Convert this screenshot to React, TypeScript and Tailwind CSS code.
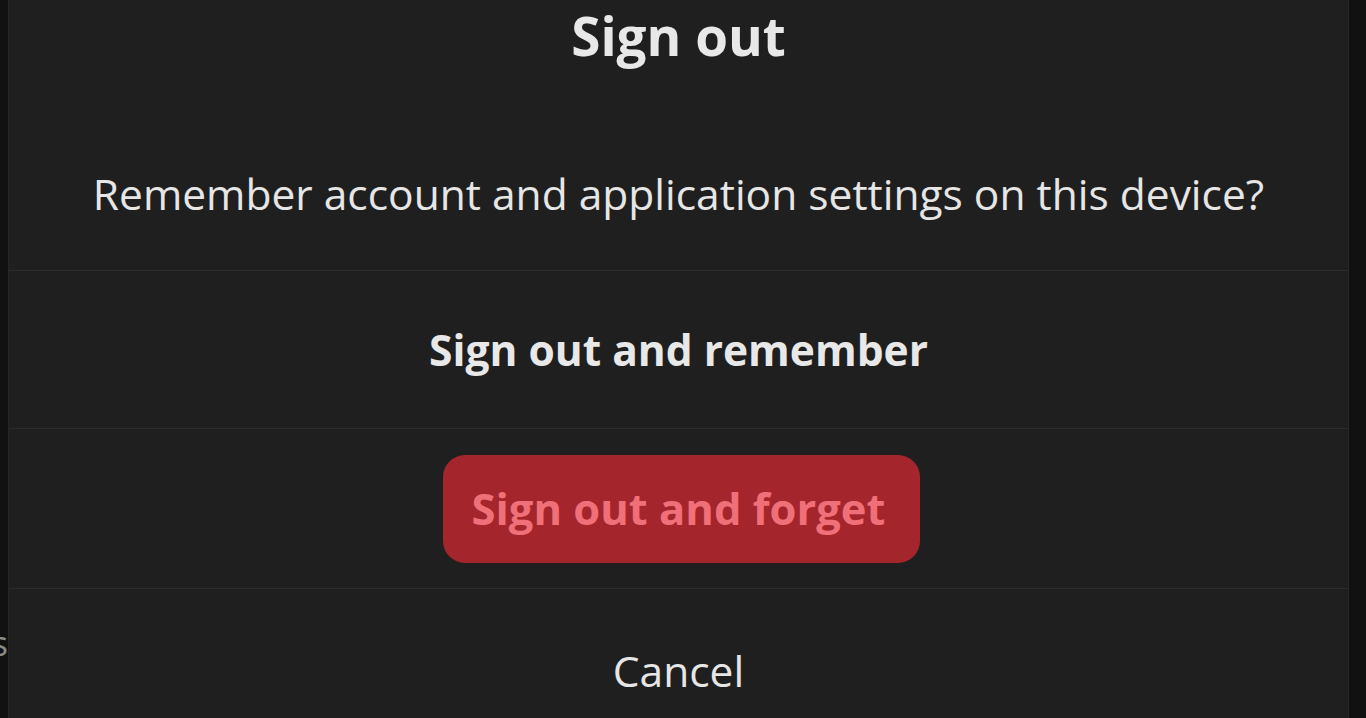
export default function App() {
  const font = { fontFamily: '"Open Sans", "Noto Sans", sans-serif' };

  return (
    <div className="flex h-[718px] w-full overflow-hidden bg-[#111111] text-[#e6e6e6]" style={font}>
      {/* page behind the dialog */}
      <div className="flex w-[8px] shrink-0 flex-col justify-end overflow-hidden pb-[58px]">
        <div className="flex justify-end">
          <span className="shrink-0 text-[34px] leading-none text-[#8a8a8a]">s</span>
        </div>
      </div>

      <div className="flex flex-1 flex-col border-x border-[#262626] bg-[#1f1f1f]">
        <div className="flex h-[271px] shrink-0 flex-col items-center border-b border-[#2c2c2c]">
          <h1 className="text-[53px] font-bold leading-[72px] text-[#e8e8e8]">Sign out</h1>
          <p className="mt-[92px] text-[42.5px] leading-[60px]">
            Remember account and application settings on this device?
          </p>
        </div>

        <div className="flex h-[158px] shrink-0 items-center justify-center border-b border-[#2c2c2c]">
          <button className="text-[42.5px] font-bold text-[#e8e8e8]">Sign out and remember</button>
        </div>

        <div className="flex h-[160px] shrink-0 items-center justify-center border-b border-[#2c2c2c]">
          <button className="ml-[6px] flex h-[108px] w-[477px] items-center justify-center rounded-[22px] bg-[#a4262c] pr-[6px] text-[43.5px] font-bold text-[#f0707a]">
            Sign out and forget
          </button>
        </div>

        <div className="flex flex-1 items-start justify-center pt-[52px]">
          <button className="text-[42.5px] leading-[60px] text-[#e6e6e6]">Cancel</button>
        </div>
      </div>

      <div className="w-[17px] shrink-0" />
    </div>
  );
}
